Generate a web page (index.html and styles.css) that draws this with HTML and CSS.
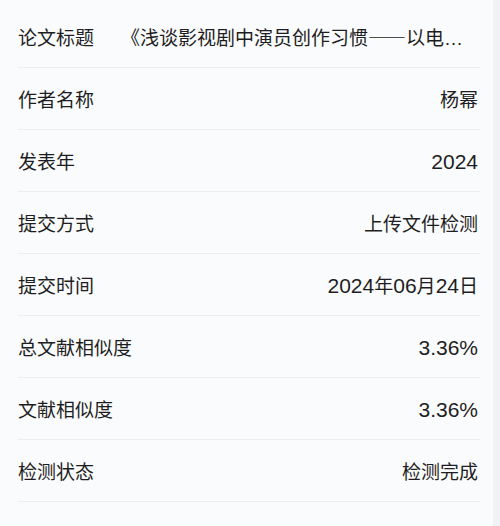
FILE: index.html
```html
<!DOCTYPE html>
<html lang="zh-CN">
<head>
<meta charset="utf-8">
<link rel="stylesheet" href="styles.css">
</head>
<body>
<div class="panel">
  <div class="row"><span class="label">论文标题</span><span class="value title">《浅谈影视剧中演员创作习惯<span class="cjk">——</span>以电影〈我的姐姐〉为例》</span></div>
  <div class="row"><span class="label">作者名称</span><span class="value">杨幂</span></div>
  <div class="row"><span class="label">发表年</span><span class="value"><span class="num">2024</span></span></div>
  <div class="row"><span class="label">提交方式</span><span class="value">上传文件检测</span></div>
  <div class="row"><span class="label">提交时间</span><span class="value"><span class="num">2024</span>年<span class="num">06</span>月<span class="num">24</span>日</span></div>
  <div class="row"><span class="label">总文献相似度</span><span class="value"><span class="num">3.36%</span></span></div>
  <div class="row"><span class="label">文献相似度</span><span class="value"><span class="num">3.36%</span></span></div>
  <div class="row"><span class="label">检测状态</span><span class="value">检测完成</span></div>
</div>
</body>
</html>
```
FILE: styles.css
```css
html, body {
  margin: 0;
  padding: 0;
  background: #f1f2f5;
}
body {
  width: 500px;
  height: 526px;
  overflow: hidden;
  font-family: "Noto Sans CJK SC", sans-serif;
  color: #1e1e22;
}
.panel {
  width: 493px;
  height: 526px;
  box-sizing: border-box;
  background: #fafbfd;
  padding: 6px 13px 0 18px;
}
.row {
  display: flex;
  align-items: center;
  height: 62px;
  box-sizing: border-box;
  border-bottom: 1px solid #eceef2;
  font-size: 19px;
  padding-right: 2px;
}
.label {
  flex: none;
  white-space: nowrap;
}
.value {
  flex: 1;
  min-width: 0;
  text-align: right;
  white-space: nowrap;
  overflow: hidden;
  text-overflow: ellipsis;
}
.num {
  font-family: "Liberation Sans", sans-serif;
  font-size: 21px;
}
.value.title {
  font-family: "Liberation Sans", "Noto Sans CJK SC", sans-serif;
  text-align: left;
  margin-left: 27px;
  padding-right: 8px;
}
.cjk {
  font-family: "Noto Sans CJK SC", sans-serif;
}
```
